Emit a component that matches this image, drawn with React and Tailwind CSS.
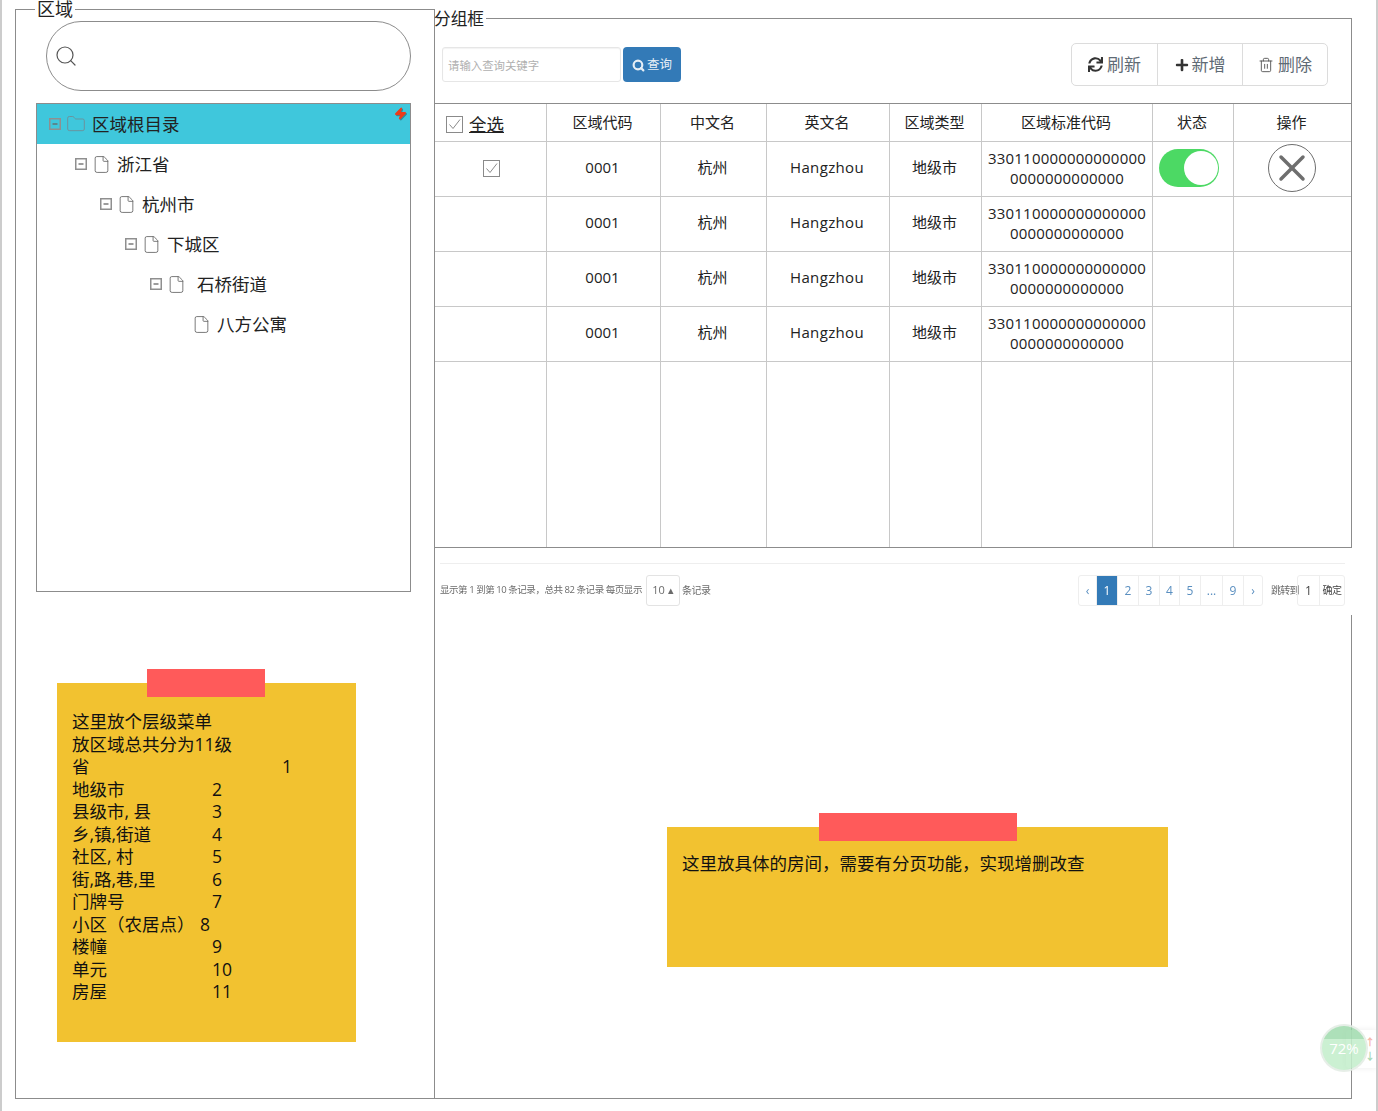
import { Search, Folder, File, Zap, Trash2, X } from 'lucide-react'
import { FaSync, FaPlus } from 'react-icons/fa'

const TREE = [
  { label: '区域根目录', pad: 'pl-[12px]', gap: 'mr-[6px]', active: true },
  { label: '浙江省', pad: 'pl-[38px]', gap: 'mr-[6px]' },
  { label: '杭州市', pad: 'pl-[63px]', gap: 'mr-[6px]' },
  { label: '下城区', pad: 'pl-[88px]', gap: 'mr-[6px]' },
  { label: '石桥街道', pad: 'pl-[113px]', gap: 'mr-[11px]' },
  { label: '八方公寓', pad: 'pl-[155px]', gap: 'mr-[6px]', leaf: true },
]

const LEVELS = [
  ['省', 'w-[210px]', '1'],
  ['地级市', 'w-[140px]', '2'],
  ['县级市, 县', 'w-[140px]', '3'],
  ['乡,镇,街道', 'w-[140px]', '4'],
  ['社区, 村', 'w-[140px]', '5'],
  ['街,路,巷,里', 'w-[140px]', '6'],
  ['门牌号', 'w-[140px]', '7'],
  ['小区（农居点）', 'w-[128px]', '8'],
  ['楼幢', 'w-[140px]', '9'],
  ['单元', 'w-[140px]', '10'],
  ['房屋', 'w-[140px]', '11'],
]

const HEADERS = ['区域代码', '中文名', '英文名', '区域类型', '区域标准代码', '状态', '操作']
const PAGES = ['‹', '1', '2', '3', '4', '5', '...', '9', '›']
const PAGE_WIDTHS = ['w-[18px]', 'w-[21px]', 'w-[21px]', 'w-[21px]', 'w-[20px]', 'w-[21px]', 'w-[22px]', 'w-[21px]', 'w-[18px]']

function CheckBox() {
  return (
    <svg width="17" height="17" viewBox="0 0 17 17" fill="none" className="inline-block">
      <rect x="0.5" y="0.5" width="16" height="16" stroke="#8a8a8a" />
      <path d="M3.5 8.5 L7 12.5 L14 3.5" stroke="#8a8a8a" />
    </svg>
  )
}

function MinusBox() {
  return (
    <svg width="12" height="12" viewBox="0 0 12 12" fill="none" className="mr-[5px] shrink-0">
      <rect x="0.75" y="0.75" width="10.5" height="10.5" stroke="#8f8f8f" strokeWidth="1.5" />
      <path d="M3.5 6 H8.5" stroke="#666" strokeWidth="1.3" />
    </svg>
  )
}

function Note({ className, tape, children }) {
  return (
    <div className={`relative bg-[#f2c230] text-[17.5px] leading-[22.5px] text-[#111] ${className}`}>
      <div className={`absolute top-[-14px] h-[28px] bg-[#ff5a5a] ${tape}`} />
      {children}
    </div>
  )
}

function Tree() {
  return (
    <div className="mt-[12px] ml-[20px] h-[489px] w-[375px] border border-[#8c8c8c]">
      {TREE.map(row => (
        <div
          key={row.label}
          className={`relative flex h-[40px] items-center text-[17.5px] text-[#222] ${row.pad} ${row.active ? 'bg-[#3fc7dc]' : ''}`}
        >
          {!row.leaf && <MinusBox />}
          {row.active
            ? <Folder size={20} strokeWidth={1.1} className={`text-[#6f8f98] ${row.gap}`} />
            : <File size={19} strokeWidth={1.1} className={`text-[#666] ${row.gap}`} />}
          <span>{row.label}</span>
          {row.active && (
            <Zap size={13} className="absolute top-[3px] right-[3px] fill-[#f03a17] text-[#f03a17] drop-shadow-[1px_1px_0_rgba(0,0,0,0.3)]" />
          )}
        </div>
      ))}
    </div>
  )
}

function LeftPanel() {
  return (
    <fieldset className="h-[1099px] w-[420px] shrink-0 border border-[#8c8c8c] p-0">
      <legend className="ml-[19px] px-[2px] text-[18px] leading-[18px] text-[#222]">区域</legend>
      <div className="mt-[3px] ml-[30px] flex h-[70px] w-[365px] items-center rounded-[35px] border border-[#8c8c8c] pl-[7px]">
        <Search size={24} strokeWidth={1.2} className="-mt-[1px] text-[#555]" />
      </div>
      <Tree />
      <Note className="mt-[91px] ml-[41px] h-[359px] w-[299px] pt-[27px] pl-[15px]" tape="left-[90px] w-[118px]">
        <div>这里放个层级菜单</div>
        <div>放区域总共分为11级</div>
        {LEVELS.map(([name, width, num]) => (
          <div key={name} className="flex">
            <span className={width}>{name}</span>
            <span>{num}</span>
          </div>
        ))}
      </Note>
    </fieldset>
  )
}

function Toolbar() {
  return (
    <div className="flex h-[75px] items-start justify-between pr-[23px] pl-[7px]">
      <div className="mt-[19px] flex">
        <div className="flex h-[35px] w-[179px] items-center rounded-[3px] border border-[#e6e6e6] pt-[2px] pl-[5px] text-[11.4px] text-[#b0b0b0] shadow-[inset_0_1px_1px_rgba(0,0,0,0.05)]">
          请输入查询关键字
        </div>
        <button className="ml-[2px] flex h-[35px] w-[58px] items-center justify-center gap-[2px] rounded-[4px] bg-[#337ab7] pt-[2px] text-[12.5px] text-[#e6eef5]">
          <Search size={13} strokeWidth={4} />
          查询
        </button>
      </div>
      <div className="mt-[15px] flex h-[43px] w-[257px] rounded-[5px] border border-[#dcdcdc] text-[17px] text-[#5f6b75]">
        <div className="flex w-[86px] items-center justify-center gap-[4px] border-r border-[#dcdcdc]">
          <FaSync size={15} className="text-[#333]" />
          刷新
        </div>
        <div className="flex w-[85px] items-center justify-center gap-[3px] border-r border-[#dcdcdc]">
          <FaPlus size={14} className="text-[#333]" />
          新增
        </div>
        <div className="flex flex-1 items-center justify-center gap-[4px]">
          <Trash2 size={16} strokeWidth={1.4} className="text-[#555]" />
          删除
        </div>
      </div>
    </div>
  )
}

function DataTable() {
  const cell = 'border-r border-b border-[#c8c8c8] text-center align-middle'
  const body = `${cell} pr-[2px] pb-[3px]`
  return (
    <table className="w-[916px] table-fixed border-separate border-spacing-0 border-t border-b border-[#8c8c8c] text-[15px] text-[#222]">
      <colgroup>
        <col className="w-[112px]" />
        <col className="w-[114px]" />
        <col className="w-[106px]" />
        <col className="w-[123px]" />
        <col className="w-[92px]" />
        <col className="w-[171px]" />
        <col className="w-[81px]" />
        <col className="w-[117px]" />
      </colgroup>
      <thead>
        <tr className="h-[38px]">
          <th className={`${cell} pl-[11px] text-left font-normal`}>
            <div className="mt-[3px] flex items-center gap-[6px]">
              <CheckBox />
              <span className="text-[17.5px] underline">全选</span>
            </div>
          </th>
          {HEADERS.map((h, i) => (
            <th key={h} className={`${cell} pr-[2px] font-normal ${i === 6 ? 'border-r-0' : ''}`}>{h}</th>
          ))}
        </tr>
      </thead>
      <tbody>
        {[0, 1, 2, 3].map(i => (
          <tr key={i} className="h-[55px]">
            <td className={`${cell} pb-[5px] pl-[2px]`}>{i === 0 && <CheckBox />}</td>
            <td className={body}>0001</td>
            <td className={body}>杭州</td>
            <td className={`${body} tracking-[0.35px]`}>Hangzhou</td>
            <td className={body}>地级市</td>
            <td className={`${cell} pb-[3px] leading-[20px] tracking-[0.2px]`}>
              330110000000000000<br />0000000000000
            </td>
            <td className={`${cell} pb-[3px]`}>
              {i === 0 && (
                <div className="ml-[6px] flex h-[38px] w-[60px] items-center justify-end rounded-full bg-[#4cd964] pr-[1px]">
                  <div className="h-[34px] w-[34px] rounded-full bg-white" />
                </div>
              )}
            </td>
            <td className={`${body} border-r-0`}>
              {i === 0 && (
                <div className="mx-auto flex h-[48px] w-[48px] items-center justify-center rounded-full border border-[#6e6e6e]">
                  <X size={44} strokeWidth={1.9} className="text-[#6e6e6e]" />
                </div>
              )}
            </td>
          </tr>
        ))}
        <tr className="h-[185px]">
          {[0, 1, 2, 3, 4, 5, 6].map(i => (
            <td key={i} className="border-r border-[#c8c8c8]" />
          ))}
          <td />
        </tr>
      </tbody>
    </table>
  )
}

function Pagination() {
  return (
    <div className="relative z-10 -mr-[2px] h-[67px] w-[918px] bg-white pt-[15px] pl-[5px] text-[10px] text-[#6b6b6b] blur-[0.35px]">
      <div className="h-[1px] w-[905px] bg-[#eeeeee]" />
      <div className="mt-[11px] flex w-[905px] items-center justify-between">
        <div className="flex items-center">
          <span className="w-[206px] whitespace-nowrap text-[9.5px] tracking-[-0.45px]">显示第 1 到第 10 条记录，总共 82 条记录 每页显示</span>
          <span className="flex h-[31px] w-[34px] items-center justify-center rounded-[3px] border border-[#e3e3e3] text-[11px]">10 ▴</span>
          <span className="ml-[2px] tracking-[-0.5px]">条记录</span>
        </div>
        <div className="flex items-center">
          <div className="flex h-[31px] rounded-[3px] border border-[#eeeeee] text-[12px] text-[#5a8fc0]">
            {PAGES.map((p, i) => (
              <span
                key={i}
                className={`flex items-center justify-center border-r border-[#eeeeee] last:border-r-0 ${PAGE_WIDTHS[i]} ${p === '1' ? 'bg-[#337ab7] text-white' : ''}`}
              >
                {p}
              </span>
            ))}
          </div>
          <span className="ml-[8px] w-[26px] whitespace-nowrap tracking-[-0.8px]">跳转到</span>
          <div className="flex h-[31px] rounded-[3px] border border-[#eeeeee] text-[#444]">
            <span className="flex w-[22px] items-center justify-center border-r border-[#eeeeee] text-[12px]">1</span>
            <span className="flex w-[24px] items-center justify-center whitespace-nowrap tracking-[-0.6px]">确定</span>
          </div>
        </div>
      </div>
    </div>
  )
}

function RightPanel() {
  return (
    <fieldset className="mt-[8px] h-[1091px] w-[917px] shrink-0 border border-l-0 border-[#8c8c8c] p-0">
      <legend className="-ml-px pr-[2px] text-[16.7px] leading-[20px] text-[#222]">
        <span className="relative top-[1px]">分组框</span>
      </legend>
      <Toolbar />
      <DataTable />
      <Pagination />
      <Note className="mt-[212px] ml-[232px] h-[140px] w-[501px] pt-[25px] pl-[15px]" tape="left-[152px] w-[198px]">
        这里放具体的房间，需要有分页功能，实现增删改查
      </Note>
    </fieldset>
  )
}

export default function App() {
  return (
    <div className="relative flex h-[1111px] w-[1378px] overflow-hidden border-r-2 border-l-2 border-[#cccccc] bg-white pl-[13px] font-['Open_Sans','Noto_Sans_CJK_SC',sans-serif]">
      <LeftPanel />
      <RightPanel />
      {/* floating speed widget, half see-through */}
      <div className="absolute top-[1030px] right-0 flex h-[38px] w-[30px] flex-col items-end justify-center rounded-l-[4px] bg-white/70 pr-[1px] text-[10px] leading-[14px] font-bold shadow-[0_0_6px_rgba(0,0,0,0.08)]">
        <span className="text-[#f5b5a8]">↑</span>
        <span className="text-[#a8d8b4]">↓</span>
      </div>
      <div className="absolute top-[1024px] left-[1318px] flex h-[48px] w-[48px] items-center justify-center overflow-hidden rounded-full border-2 border-[#eeeeee]/80 bg-[#a8e6b4]/60 text-[15px] text-white">
        <div className="absolute top-0 left-0 h-[13px] w-full bg-[#8fcfa0]/50" />
        72%
      </div>
    </div>
  )
}
